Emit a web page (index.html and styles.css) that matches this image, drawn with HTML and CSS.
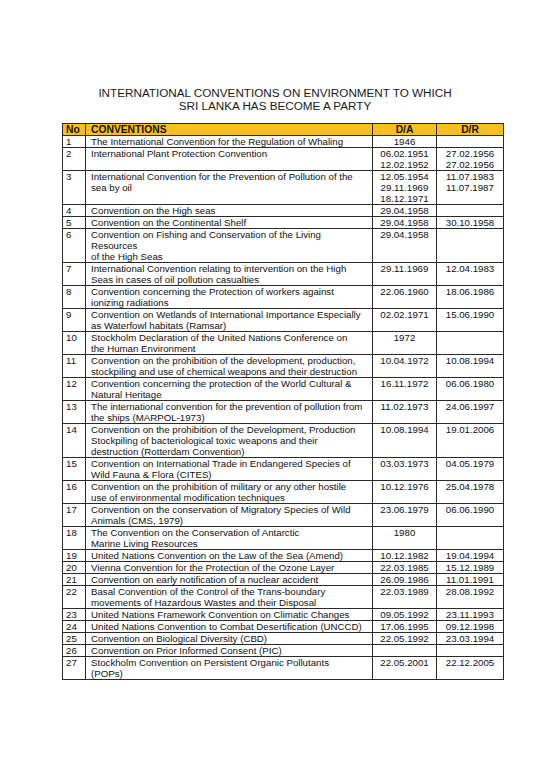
FILE: index.html
```html
<!DOCTYPE html>
<html>
<head>
<meta charset="utf-8">
<link rel="stylesheet" href="styles.css">
</head>
<body>
<div class="page">
<h1 class="title">INTERNATIONAL CONVENTIONS ON ENVIRONMENT TO WHICH<br>SRI LANKA HAS BECOME A PARTY</h1>
<table class="conv">
<colgroup><col class="c-no"><col class="c-name"><col class="c-da"><col class="c-dr"></colgroup>
<thead>
<tr><th class="no">No</th><th class="name">CONVENTIONS</th><th class="d">D/A</th><th class="d">D/R</th></tr>
</thead>
<tbody>
<tr><td class="no">1</td><td class="name">The International Convention for the Regulation of Whaling</td><td class="d">1946</td><td class="d"></td></tr>
<tr><td class="no">2</td><td class="name">International Plant Protection Convention</td><td class="d">06.02.1951<br>12.02.1952</td><td class="d">27.02.1956<br>27.02.1956</td></tr>
<tr><td class="no">3</td><td class="name">International Convention for the Prevention of Pollution of the<br>sea by oil</td><td class="d">12.05.1954<br>29.11.1969<br>18.12.1971</td><td class="d">11.07.1983<br>11.07.1987</td></tr>
<tr><td class="no">4</td><td class="name">Convention on the High seas</td><td class="d">29.04.1958</td><td class="d"></td></tr>
<tr><td class="no">5</td><td class="name">Convention on the Continental Shelf</td><td class="d">29.04.1958</td><td class="d">30.10.1958</td></tr>
<tr><td class="no">6</td><td class="name">Convention on Fishing and Conservation of the Living<br>Resources<br>of the High Seas</td><td class="d">29.04.1958</td><td class="d"></td></tr>
<tr><td class="no">7</td><td class="name">International Convention relating to intervention on the High<br>Seas in cases of oil pollution casualties</td><td class="d">29.11.1969</td><td class="d">12.04.1983</td></tr>
<tr><td class="no">8</td><td class="name">Convention concerning the Protection of workers against<br>ionizing radiations</td><td class="d">22.06.1960</td><td class="d">18.06.1986</td></tr>
<tr><td class="no">9</td><td class="name">Convention on Wetlands of International Importance Especially<br>as Waterfowl habitats (Ramsar)</td><td class="d">02.02.1971</td><td class="d">15.06.1990</td></tr>
<tr><td class="no">10</td><td class="name">Stockholm Declaration of the United Nations Conference on<br>the Human Environment</td><td class="d">1972</td><td class="d"></td></tr>
<tr><td class="no">11</td><td class="name">Convention on the prohibition of the development, production,<br>stockpiling and use of chemical weapons and their destruction</td><td class="d">10.04.1972</td><td class="d">10.08.1994</td></tr>
<tr><td class="no">12</td><td class="name">Convention concerning the protection of the World Cultural &amp;<br>Natural Heritage</td><td class="d">16.11.1972</td><td class="d">06.06.1980</td></tr>
<tr><td class="no">13</td><td class="name">The international convention for the prevention of pollution from<br>the ships (MARPOL-1973)</td><td class="d">11.02.1973</td><td class="d">24.06.1997</td></tr>
<tr><td class="no">14</td><td class="name">Convention on the prohibition of the Development, Production<br>Stockpiling of bacteriological toxic weapons and their<br>destruction (Rotterdam Convention)</td><td class="d">10.08.1994</td><td class="d">19.01.2006</td></tr>
<tr><td class="no">15</td><td class="name">Convention on International Trade in Endangered Species of<br>Wild Fauna &amp; Flora (CITES)</td><td class="d">03.03.1973</td><td class="d">04.05.1979</td></tr>
<tr><td class="no">16</td><td class="name">Convention on the prohibition of military or any other hostile<br>use of environmental modification techniques</td><td class="d">10.12.1976</td><td class="d">25.04.1978</td></tr>
<tr><td class="no">17</td><td class="name">Convention on the conservation of Migratory Species of Wild<br>Animals (CMS, 1979)</td><td class="d">23.06.1979</td><td class="d">06.06.1990</td></tr>
<tr><td class="no">18</td><td class="name">The Convention on the Conservation of Antarctic<br>Marine Living Resources</td><td class="d">1980</td><td class="d"></td></tr>
<tr><td class="no">19</td><td class="name">United Nations Convention on the Law of the Sea (Amend)</td><td class="d">10.12.1982</td><td class="d">19.04.1994</td></tr>
<tr><td class="no">20</td><td class="name">Vienna Convention for the Protection of the Ozone Layer</td><td class="d">22.03.1985</td><td class="d">15.12.1989</td></tr>
<tr><td class="no">21</td><td class="name">Convention on early notification of a nuclear accident</td><td class="d">26.09.1986</td><td class="d">11.01.1991</td></tr>
<tr><td class="no">22</td><td class="name">Basal Convention of the Control of the Trans-boundary<br>movements of Hazardous Wastes and their Disposal</td><td class="d">22.03.1989</td><td class="d">28.08.1992</td></tr>
<tr><td class="no">23</td><td class="name">United Nations Framework Convention on Climatic Changes</td><td class="d">09.05.1992</td><td class="d">23.11.1993</td></tr>
<tr><td class="no">24</td><td class="name">United Nations Convention to Combat Desertification (UNCCD)</td><td class="d">17.06.1995</td><td class="d">09.12.1998</td></tr>
<tr><td class="no">25</td><td class="name">Convention on Biological Diversity (CBD)</td><td class="d">22.05.1992</td><td class="d">23.03.1994</td></tr>
<tr><td class="no">26</td><td class="name">Convention on Prior Informed Consent (PIC)</td><td class="d"></td><td class="d"></td></tr>
<tr><td class="no">27</td><td class="name">Stockholm Convention on Persistent Organic Pollutants<br>(POPs)</td><td class="d">22.05.2001</td><td class="d">22.12.2005</td></tr>
</tbody>
</table>
</div>
</body>
</html>
```
FILE: styles.css
```css
html, body {
  margin: 0;
  padding: 0;
  background: #ffffff;
}
.page {
  padding-top: 86px;
  font-family: "Liberation Sans", Arial, sans-serif;
  color: #111;
}
.title {
  margin: 0 0 11px 0;
  text-align: center;
  font-weight: normal;
  font-size: 11.7px;
  line-height: 13px;
  color: #1a1a1a;
}
.conv {
  margin-left: 62px;
  width: 441px;
  border-collapse: collapse;
  table-layout: fixed;
  font-size: 9.7px;
  line-height: 11px;
}
.c-no { width: 23px; }
.c-name { width: 287px; }
.c-da { width: 64px; }
.c-dr { width: 67px; }
.conv th, .conv td {
  border: 1px solid #2a2a2a;
  padding: 0;
  vertical-align: top;
  white-space: nowrap;
  overflow: hidden;
}
.conv th {
  background: #fcbf1e;
  font-weight: bold;
  font-size: 10.3px;
}
.conv .no { text-align: left; padding-left: 3px; }
.conv .name { text-align: left; padding-left: 5px; }
.conv .d { text-align: center; }
```
